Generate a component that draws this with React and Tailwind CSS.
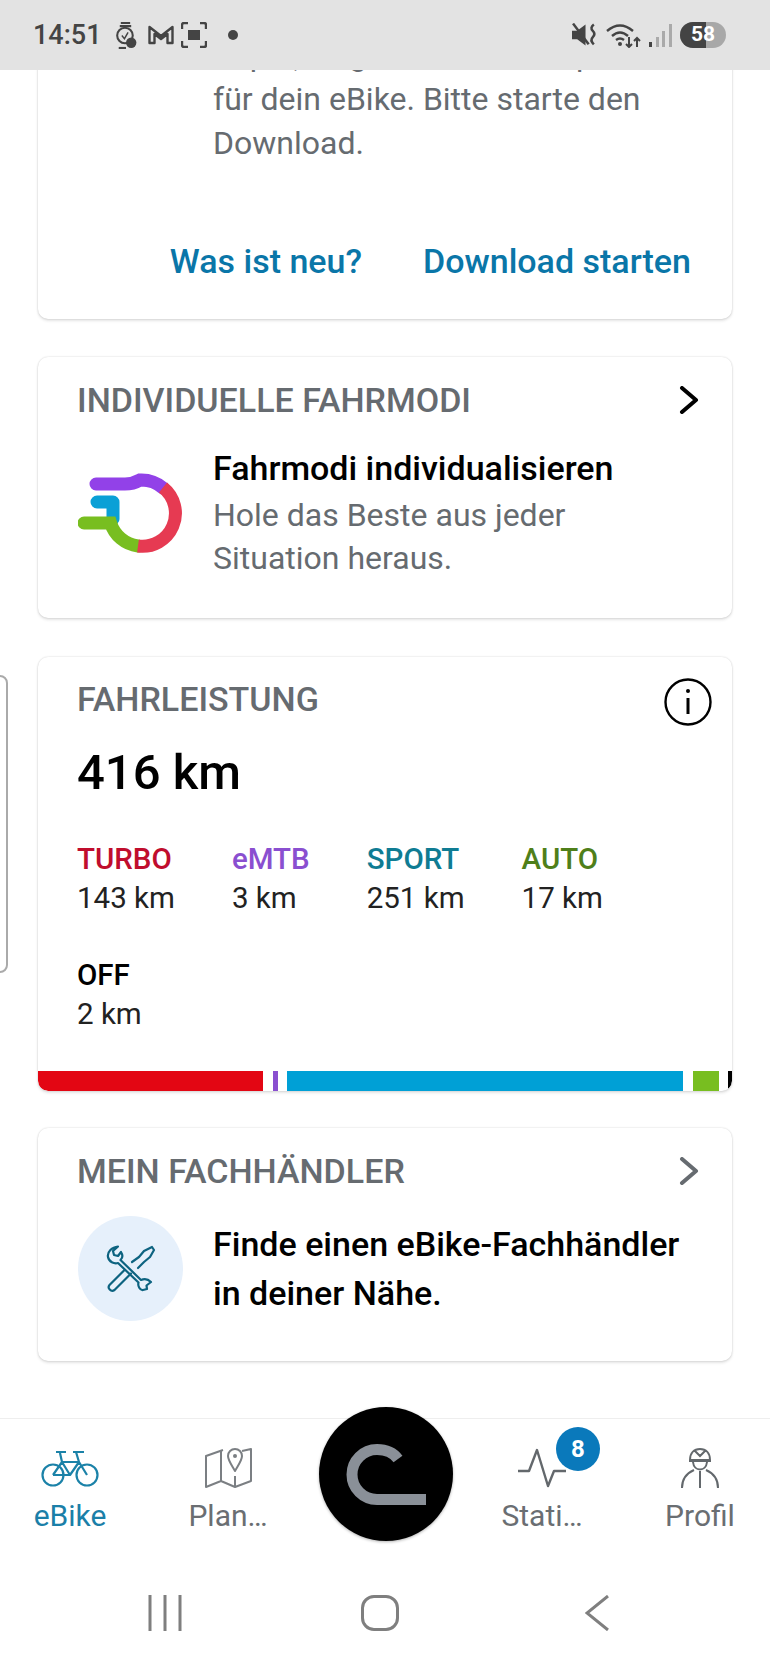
const font = { fontFamily: "Roboto, sans-serif" };

const Card = ({ children, className = "" }) => (
  <section
    className={`rounded-[10px] bg-white shadow-[0_0_2px_rgba(0,0,0,0.18),0_2px_3px_rgba(0,0,0,0.1)] ${className}`}
  >
    {children}
  </section>
);

const Chevron = ({ color }) => (
  <svg width="20" height="28" viewBox="0 0 20 28" fill="none" stroke={color} strokeWidth="4" strokeLinecap="round" strokeLinejoin="round">
    <path d="M3 2 L17 14 L3 26" />
  </svg>
);

const CardHeader = ({ title, chevron }) => (
  <div className="flex items-center justify-between pl-[39px] pr-[33px]">
    <h2 className="text-[34px] leading-9 font-medium text-[#666b70]">{title}</h2>
    {chevron && <Chevron color={chevron} />}
  </div>
);

const ModesIcon = () => (
  <svg width="105" height="80" viewBox="0 0 105 80" fill="none" strokeWidth="13">
    <path d="M19 29 H35 V46" stroke="#0aa0d6" strokeLinecap="round" strokeLinejoin="round" />
    <path d="M18 11 H47 Q55 11 62 7 A33 33 0 0 1 85 15" stroke="#9241e8" strokeLinecap="round" />
    <path d="M6 50 H32.6 A33 33 0 0 0 60 73" stroke="#78be20" strokeLinecap="round" />
    <path d="M85 14.5 A33 33 0 0 1 60 73" stroke="#e63a52" />
  </svg>
);

const ToolsIcon = () => (
  <svg width="50" height="48" viewBox="0 0 50 48" fill="none" stroke="#0d6380" strokeWidth="2.2" strokeLinejoin="round" strokeLinecap="round">
    <path d="M12 1.5 L7 6 L8 10 L12 11 L15 7 C17 10 16.5 13 14.5 15 L35 35 C38 33.5 42 34 45 37 L40.5 40.5 L41 44 L37 45 C34 45.5 31.5 41 32.5 37.5 L12 18 C8 19 3 17 2 12 C1 7 6 2 12 1.5 Z" />
    <path d="M18.5 25 L3.5 40 C1 43 5 47.5 8.5 45 L25 28.5" />
    <path d="M26 17 L33 12 L38 6 L46 2 L48 5 L44 12 L38 17 L32 23" />
  </svg>
);

const BikeIcon = () => (
  <svg width="58" height="37" viewBox="0 0 58 37" fill="none" stroke="#1b82a8" strokeWidth="2.2" strokeLinejoin="round">
    <circle cx="12" cy="25" r="10.5" />
    <circle cx="46" cy="25" r="10.5" />
    <path d="M12 25 L21 12 H38 L46 25 M21 12 L29 25 H12 M29 25 L38 12 M19 3 L21 12 M38 12 L35 2 M15 2 H25 M32 2 H43" />
  </svg>
);

const MapIcon = () => (
  <svg width="48" height="40" viewBox="0 0 48 40" fill="none" stroke="#7b7f83" strokeWidth="2" strokeLinejoin="round">
    <path d="M19 2 L2 8 V39 L17 33 L31 39 L47 33 V1 L38 3 M17 3 V33 M31 28 V39" />
    <path d="M31 23 C27 16 24 12 24 8 A7 7 0 0 1 38 8 C38 12 35 16 31 23 Z" />
    <circle cx="31" cy="8" r="2" fill="#7b7f83" stroke="none" />
  </svg>
);

const PulseIcon = () => (
  <svg width="48" height="40" viewBox="0 0 48 40" fill="none" stroke="#63686c" strokeWidth="2.4" strokeLinejoin="round">
    <path d="M0 23 H11 L19 2 L30 38 L36 23 H48" />
  </svg>
);

const ProfileIcon = () => (
  <svg width="38" height="40" viewBox="0 0 38 40" fill="none" stroke="#63686c" strokeWidth="2">
    <path d="M9 12 C9 5 13 1 19 1 C25 1 29 5 29 12 H9 Z M14 3 L19 8 L24 3 M9 12 V13 H29 V12" />
    <path d="M12 14 C13 24 25 24 26 14" />
    <path d="M1 40 C1 30 6 25 13 22 M37 40 C37 30 32 25 25 22 M19 23 V40" />
  </svg>
);

const NavItem = ({ icon, label, active, badge }) => (
  <div className="relative flex flex-col items-center">
    <div className="flex h-10 items-center">{icon}</div>
    <span className={`mt-[10px] text-[30px] leading-9 ${active ? "text-[#1b7fa8]" : "text-[#6a6e72]"}`}>{label}</span>
    {badge && (
      <span className="absolute top-[-21px] left-[93px] flex h-11 w-11 items-center justify-center rounded-full bg-[#0a79bb] text-[24px] font-bold text-white">
        {badge}
      </span>
    )}
  </div>
);

const modes = [
  { name: "TURBO", km: "143 km", color: "text-[#c00d2d]" },
  { name: "eMTB", km: "3 km", color: "text-[#8a4fd0]" },
  { name: "SPORT", km: "251 km", color: "text-[#0f7c93]" },
  { name: "AUTO", km: "17 km", color: "text-[#4f7f1a]" },
  { name: "OFF", km: "2 km", color: "text-black" },
];

const StatusBar = () => (
  <header className="relative z-10 flex h-[70px] shrink-0 items-center justify-between bg-[#e3e3e3] pr-11 pl-[33px] text-[#444]">
    <div className="flex items-center">
      <span className="w-[82px] text-[27px] font-medium">14:51</span>
      <svg width="22" height="27" viewBox="0 0 20 26" fill="none" stroke="#444" strokeWidth="2">
        <path d="M5 1 H14 M4 4 H15" />
        <circle cx="9" cy="13" r="7.5" />
        <path d="M6 13 L8.5 16 L12 10" strokeWidth="1.4" />
        <path d="M3 25 H10" />
        <circle cx="15" cy="20" r="5" fill="#444" stroke="none" />
      </svg>
      <svg className="ml-[10px]" width="28" height="20" viewBox="0 0 27 20" fill="none" stroke="#444" strokeWidth="2.4" strokeLinejoin="round">
        <path d="M2 18 V2 L13.5 11 L25 2 V18 H20 V9 L13.5 14 L7 9 V18 Z" />
      </svg>
      <svg className="ml-[6px]" width="26" height="26" viewBox="0 0 26 26" fill="none" stroke="#444" strokeWidth="2.4">
        <path d="M1 7 V3 Q1 1 3 1 H7 M19 1 H23 Q25 1 25 3 V7 M25 19 V23 Q25 25 23 25 H19 M7 25 H3 Q1 25 1 23 V19" />
        <rect x="7" y="8" width="12" height="10" fill="#444" stroke="none" />
      </svg>
      <span className="ml-[21px] h-[10px] w-[10px] rounded-full bg-[#444]" />
    </div>
    <div className="flex items-center">
      <svg width="26" height="24" viewBox="0 0 25 22" fill="#444">
        <path d="M0 7 H5 L13 1 V21 L5 15 H0 Z" />
        <path d="M1 0 L16 20" stroke="#444" strokeWidth="2.4" />
        <path d="M21 1 Q17 4 20 7 Q23 10 20 13 Q17 16 21 20" fill="none" stroke="#444" strokeWidth="2.4" />
      </svg>
      <svg className="ml-2" width="36" height="25" viewBox="0 0 36 25" fill="none" stroke="#444" strokeWidth="2.4">
        <path d="M1 8 Q14 -3 27 8 M6 13 Q14 6 22 13 M10 17 Q14 14 18 17" />
        <circle cx="14" cy="21" r="2" fill="#444" stroke="none" />
        <path d="M23 14 V24 M20 21 L23 24 L26 21 M31 24 V15 M28 18 L31 15 L34 18" strokeWidth="2" />
      </svg>
      <svg className="ml-[7px]" width="23" height="23" viewBox="0 0 23 23">
        <rect x="0" y="18" width="3" height="5" fill="#444" />
        <rect x="7" y="13" width="3" height="10" fill="#aaa" />
        <rect x="13" y="7" width="3" height="16" fill="#aaa" />
        <rect x="20" y="0" width="3" height="23" fill="#aaa" />
      </svg>
      <div className="relative ml-2 flex h-[26px] w-[46px] overflow-hidden rounded-full bg-[#a8a8a8]">
        <div className="w-[26px] bg-[#444]" />
        <span className="absolute inset-0 flex items-center justify-center text-[21px] font-bold text-white">58</span>
      </div>
    </div>
  </header>
);

export default function App() {
  return (
    <div style={font} className="relative flex h-[1669px] flex-col overflow-hidden bg-white">
      <StatusBar />

      {/* handle of the side panel */}
      <div className="absolute top-[675px] left-[-4px] h-[298px] w-3 rounded-r-lg border-2 border-[#aaa]" />

      <main className="flex flex-col px-[38px]">
        <Card className="mt-[-46px] pt-[9px] pb-[38px]">
          <p className="pl-[175px] text-[32px] leading-[44px] text-[#666b70]">
            Super, es gibt ein neues Update
            <br />
            für dein eBike. Bitte starte den
            <br />
            Download.
          </p>
          <div className="mt-[76px] flex justify-end gap-[61px] pr-[41px] text-[34px] leading-10 font-medium text-[#0a76a8]">
            <span>Was ist neu?</span>
            <span>Download starten</span>
          </div>
        </Card>

        <Card className="mt-[38px] pt-[25px] pb-[38px]">
          <CardHeader title="INDIVIDUELLE FAHRMODI" chevron="#000" />
          <div className="mt-[28px] flex items-center gap-[30px] pl-10">
            <ModesIcon />
            <div>
              <h3 className="text-[34px] leading-[44px] font-medium text-black">Fahrmodi individualisieren</h3>
              <p className="mt-[4px] text-[32px] leading-[43px] text-[#666b70]">
                Hole das Beste aus jeder
                <br />
                Situation heraus.
              </p>
            </div>
          </div>
        </Card>

        <Card className="relative mt-[39px] overflow-hidden pt-[24px]">
          <CardHeader title="FAHRLEISTUNG" />
          <svg className="absolute top-[21px] right-5" width="48" height="48" viewBox="0 0 48 48" fill="none" stroke="#000" strokeWidth="2.4">
            <circle cx="24" cy="24" r="22.5" />
            <path d="M24 20 V36" strokeWidth="3" />
            <circle cx="24" cy="13" r="2" fill="#000" stroke="none" />
          </svg>
          <p className="mt-[28px] pl-[39px] text-[49px] leading-14 font-medium text-black">416 km</p>
          <div className="mt-[38px] flex flex-wrap gap-x-[57px] gap-y-[37px] pr-10 pl-[39px]">
            {modes.map((m) => (
              <div key={m.name}>
                <p className={`text-[29.5px] leading-10 font-medium ${m.color}`}>{m.name}</p>
                <p className="text-[29.5px] leading-[39px] text-[#222]">{m.km}</p>
              </div>
            ))}
          </div>
          <div className="mt-[37px] flex h-5 overflow-hidden rounded-b-[10px]">
            <div className="w-[225px] bg-[#e30613]" />
            <div className="ml-[10px] w-[5px] bg-[#8a4fd0]" />
            <div className="ml-[9px] w-[396px] bg-[#00a0d6]" />
            <div className="ml-[10px] w-[26px] bg-[#78be20]" />
            <div className="ml-[9px] w-1 bg-black" />
          </div>
        </Card>

        <Card className="mt-[37px] pt-[25px] pb-10">
          <CardHeader title="MEIN FACHHÄNDLER" chevron="#666b70" />
          <div className="mt-[27px] flex items-center gap-[30px] pl-10">
            <div className="flex h-[105px] w-[105px] items-center justify-center rounded-full bg-[#e6f0fb]">
              <ToolsIcon />
            </div>
            <p className="text-[34px] leading-[49px] font-medium text-black">
              Finde einen eBike-Fachhändler
              <br />
              in deiner Nähe.
            </p>
          </div>
        </Card>
      </main>

      <nav className="relative mt-[57px] border-t border-[#eee] pt-[29px]">
        <div className="-mx-[9px] grid grid-cols-[158px_158px_156px_158px_158px]">
          <NavItem icon={<BikeIcon />} label="eBike" active />
          <NavItem icon={<MapIcon />} label="Plan…" />
          <div />
          <NavItem icon={<PulseIcon />} label="Stati…" badge="8" />
          <NavItem icon={<ProfileIcon />} label="Profil" />
        </div>
        <div className="absolute top-[-12px] left-[319px] flex h-[134px] w-[134px] items-center justify-center rounded-full bg-black shadow-[0_1px_3px_rgba(0,0,0,0.3)]">
          <svg width="80" height="61" viewBox="0 0 80 61" fill="none" stroke="#8a9098" strokeWidth="11">
            <path d="M52 15 Q45 5.5 31 5.5 A25 25 0 0 0 31 55.5 L80 55.5" />
          </svg>
        </div>
      </nav>

      <div className="mt-[61px] flex items-center justify-center gap-[179px] pr-[13px]">
        <svg width="34" height="36" viewBox="0 0 34 36" stroke="#7f7f7f" strokeWidth="3">
          <path d="M2 0 V36 M17 0 V36 M32 0 V36" />
        </svg>
        <div className="h-9 w-[38px] rounded-[13px] border-[3px] border-[#7f7f7f]" />
        <svg className="ml-[7px]" width="24" height="36" viewBox="0 0 24 36" fill="none" stroke="#7f7f7f" strokeWidth="3">
          <path d="M23 1 L2 18 L23 35" />
        </svg>
      </div>
    </div>
  );
}
